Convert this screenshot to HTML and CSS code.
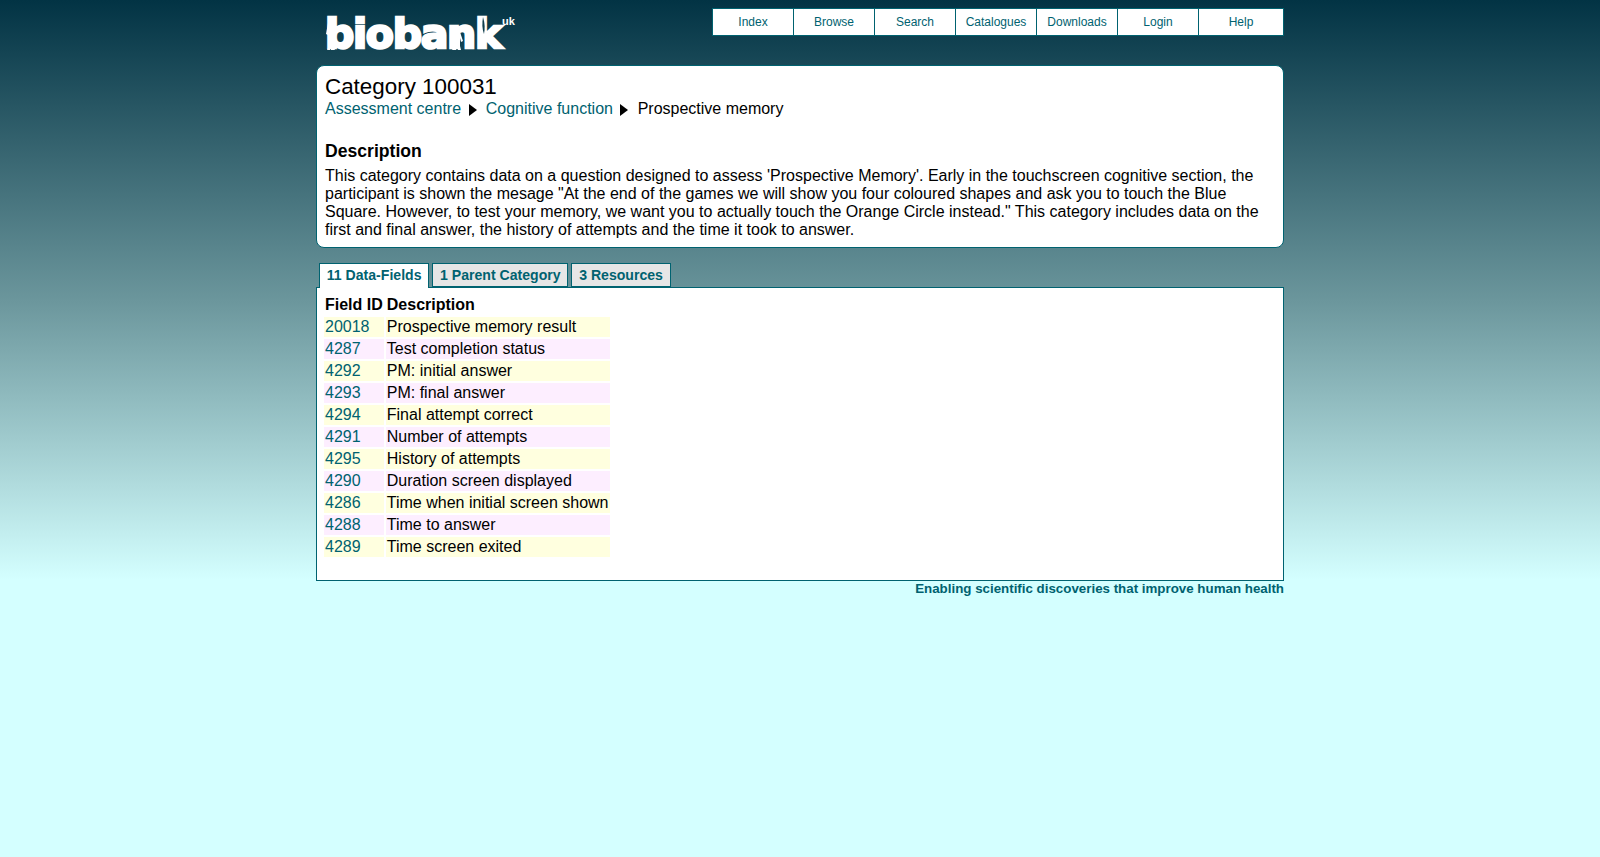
FILE: index.html
```html
<!DOCTYPE html>
<html lang="en">

<head>
	<meta charset="utf-8">
	<title>Category 100031</title>
	<link rel="stylesheet" href="styles.css">
</head>

<body>
	<div id="page">
		<div id="header">
			<a href="#" class="logo">
				<span class="logo-word">biobank</span><span class="logo-uk">uk</span>
				<svg class="logo-people" width="190" height="40" viewBox="0 0 190 40">
					<g fill="#fff">
						<circle cx="6" cy="4" r="2.2" />
						<path d="M3 7h6l1 11-1 1v13l1 2H6l0-12-1 12H2l1-2V19l-2-1z" />
						<circle cx="132" cy="13" r="2" />
						<path d="M129 16h6l3 9-2 1-1-4v8l1 4h-3l-1-8-1 8h-4l2-4v-8l-2 4-1-1z" />
					</g>
					<path d="M158 1c2 6 2 12 1 17-2-5-2-11-1-17z" fill="#0f3d4c" />
				</svg>
			</a>
			<ul class="nav">
				<li><a href="#">Index</a></li>
				<li><a href="#">Browse</a></li>
				<li><a href="#">Search</a></li>
				<li><a href="#">Catalogues</a></li>
				<li><a href="#">Downloads</a></li>
				<li><a href="#">Login</a></li>
				<li class="nav-last"><a href="#">Help</a></li>
			</ul>
		</div>

		<div id="summary">
			<div class="title">Category 100031</div>
			<div class="crumbs">
				<a href="#">Assessment centre</a>
				<svg class="crumb-arrow" width="8" height="12" viewBox="0 0 8 12"><path d="M0 0l8 6-8 6z" /></svg>
				<a href="#">Cognitive function</a>
				<svg class="crumb-arrow" width="8" height="12" viewBox="0 0 8 12"><path d="M0 0l8 6-8 6z" /></svg>
				<span>Prospective memory</span>
			</div>
			<h3>Description</h3>
			<p>This category contains data on a question designed to assess 'Prospective Memory'. Early in the touchscreen cognitive section, the participant is shown the mesage "At the end of the games we will show you four coloured shapes and ask you to touch the Blue Square. However, to test your memory, we want you to actually touch the Orange Circle instead." This category includes data on the first and final answer, the history of attempts and the time it took to answer.</p>
		</div>

		<div class="tabs">
			<a href="#" class="tab tab-on">11 Data-Fields</a>
			<a href="#" class="tab">1 Parent Category</a>
			<a href="#" class="tab">3 Resources</a>
		</div>

		<div id="panel">
			<table class="fields">
				<tr><th>Field ID</th><th>Description</th></tr>
				<tr class="odd"><td><a href="#">20018</a></td><td>Prospective memory result</td></tr>
				<tr class="even"><td><a href="#">4287</a></td><td>Test completion status</td></tr>
				<tr class="odd"><td><a href="#">4292</a></td><td>PM: initial answer</td></tr>
				<tr class="even"><td><a href="#">4293</a></td><td>PM: final answer</td></tr>
				<tr class="odd"><td><a href="#">4294</a></td><td>Final attempt correct</td></tr>
				<tr class="even"><td><a href="#">4291</a></td><td>Number of attempts</td></tr>
				<tr class="odd"><td><a href="#">4295</a></td><td>History of attempts</td></tr>
				<tr class="even"><td><a href="#">4290</a></td><td>Duration screen displayed</td></tr>
				<tr class="odd"><td><a href="#">4286</a></td><td>Time when initial screen shown</td></tr>
				<tr class="even"><td><a href="#">4288</a></td><td>Time to answer</td></tr>
				<tr class="odd"><td><a href="#">4289</a></td><td>Time screen exited</td></tr>
			</table>
		</div>

		<div id="strapline">Enabling scientific discoveries that improve human health</div>
	</div>
</body>

</html>
```

FILE: styles.css
```css
html {
	min-height: 100%;
	background: #d4ffff;
}

body {
	margin: 0;
	min-height: 857px;
	font-family: "Liberation Sans", Arial, sans-serif;
	font-size: 16px;
	color: #000;
	background: linear-gradient(#023344 0, #6b969c 300px, #d4ffff 580px) no-repeat;
}

a {
	color: #006270;
	text-decoration: none;
}

#page {
	width: 968px;
	margin: 0 auto;
	padding-top: 8px;
}

#header {
	display: flex;
	justify-content: space-between;
	align-items: flex-start;
	height: 57px;
}

.logo {
	position: relative;
	display: block;
	width: 200px;
	height: 50px;
	margin-left: 9px;
	color: #fff;
}

.logo-word {
	display: block;
	padding-top: 1px;
	font-family: "DejaVu Sans", sans-serif;
	font-weight: bold;
	font-size: 41px;
	line-height: 50px;
	letter-spacing: -1.3px;
	-webkit-text-stroke: 2.5px #fff;
}

.logo-uk {
	position: absolute;
	left: 177px;
	top: 7px;
	font-family: "Liberation Sans", sans-serif;
	font-weight: bold;
	font-size: 11px;
	line-height: 12px;
}

.logo-people {
	position: absolute;
	left: 0;
	top: 8px;
}

.nav {
	display: flex;
	margin: 0;
	padding: 0;
	list-style: none;
	background: #fff;
	border: 1px solid #006270;
	font-size: 12px;
}

.nav li {
	width: 80px;
	line-height: 26px;
	text-align: center;
	border-right: 1px solid #006270;
}

.nav li.nav-last {
	width: 84px;
	border-right: 0;
}

#summary {
	box-sizing: border-box;
	height: 183px;
	padding: 8px;
	background: #fff;
	border: 1px solid #006270;
	border-radius: 8px;
}

.title {
	font-size: 22.4px;
	line-height: 25px;
	margin-bottom: 1px;
}

.crumbs {
	display: flex;
	align-items: center;
	height: 18px;
}

.crumb-arrow {
	margin: 2px 9.2px 0 7.5px;
}

#summary h3 {
	margin: 21px 0 4px;
	font-size: 17.6px;
	line-height: 24px;
}

#summary p {
	margin: 0;
	line-height: 18px;
}

.tabs {
	display: flex;
	gap: 3px;
	height: 24px;
	margin-top: 15px;
	padding-left: 3px;
}

.tab {
	box-sizing: border-box;
	height: 24px;
	padding: 0 6.8px;
	background: #e6e6e6;
	border: 1px solid #006270;
	font-size: 14.08px;
	font-weight: bold;
	line-height: 23px;
}

.tab-on {
	position: relative;
	height: 25px;
	background: #fff;
	border-bottom: 0;
}

#panel {
	box-sizing: border-box;
	height: 294px;
	padding: 5px;
	background: #fff;
	border: 1px solid #006270;
}

.fields {
	border-spacing: 2px;
}

.fields th {
	padding: 0 1px;
	text-align: left;
	line-height: 20px;
}

.fields td {
	padding: 0 1px;
	line-height: 20px;
}

.odd td {
	background: #ffffdf;
}

.even td {
	background: #fdeeff;
}

#strapline {
	text-align: right;
	color: #006270;
	font-size: 13.33px;
	font-weight: bold;
	line-height: 15px;
}
```
